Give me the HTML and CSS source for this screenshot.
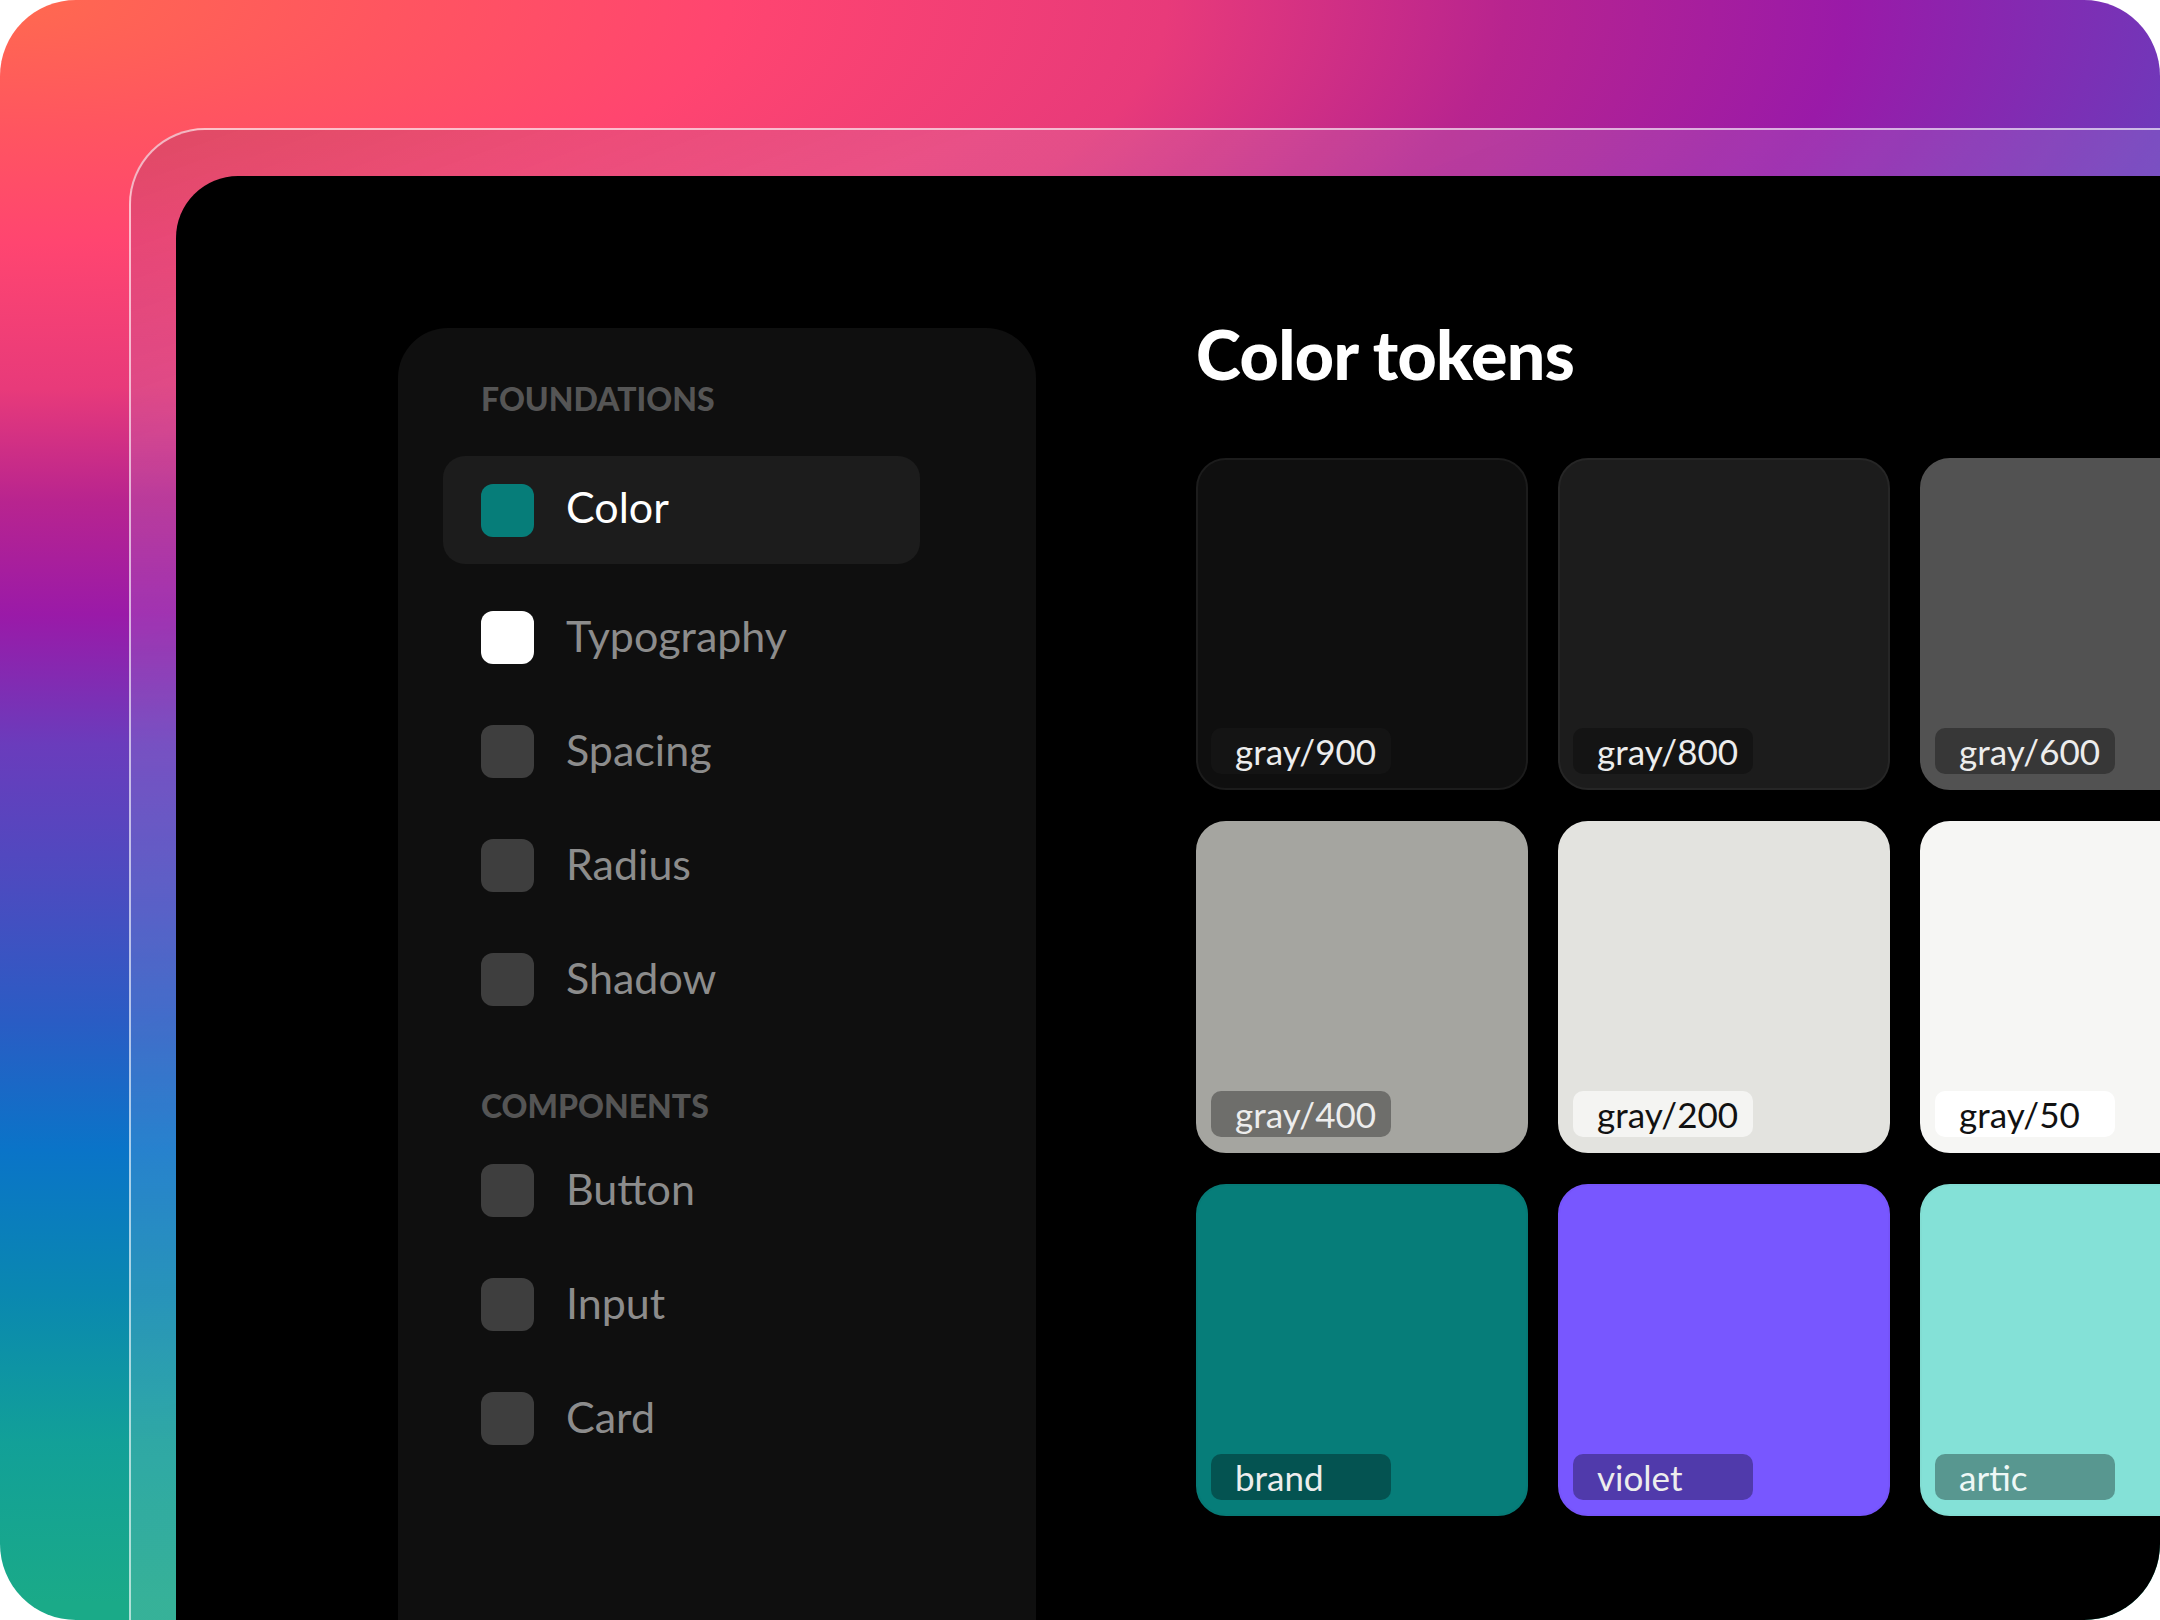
FILE: index.html
```html
<!DOCTYPE html>
<html lang="en">
<head>
<meta charset="utf-8">
<title>Color tokens</title>
<link rel="stylesheet" href="styles.css">
</head>
<body>
<div class="stage">
  <div class="frame">
    <div class="panel">
      <aside class="sidebar">
        <div class="section-label">FOUNDATIONS</div>
        <div class="nav-item active"><span class="swatch swatch-brand"></span><span class="nav-text">Color</span></div>
        <div class="nav-item"><span class="swatch swatch-white"></span><span class="nav-text">Typography</span></div>
        <div class="nav-item"><span class="swatch"></span><span class="nav-text">Spacing</span></div>
        <div class="nav-item"><span class="swatch"></span><span class="nav-text">Radius</span></div>
        <div class="nav-item"><span class="swatch"></span><span class="nav-text">Shadow</span></div>
        <div class="section-label section-label-second">COMPONENTS</div>
        <div class="nav-item"><span class="swatch"></span><span class="nav-text">Button</span></div>
        <div class="nav-item"><span class="swatch"></span><span class="nav-text">Input</span></div>
        <div class="nav-item"><span class="swatch"></span><span class="nav-text">Card</span></div>
      </aside>
      <main class="content">
        <h1 class="title">Color tokens</h1>
        <div class="grid">
          <div class="token token-g900"><span class="token-label">gray/900</span></div>
          <div class="token token-g800"><span class="token-label">gray/800</span></div>
          <div class="token token-g600"><span class="token-label">gray/600</span></div>
          <div class="token token-g400"><span class="token-label">gray/400</span></div>
          <div class="token token-g200 token-light"><span class="token-label">gray/200</span></div>
          <div class="token token-g50 token-light"><span class="token-label">gray/50</span></div>
          <div class="token token-brand"><span class="token-label">brand</span></div>
          <div class="token token-violet"><span class="token-label">violet</span></div>
          <div class="token token-artic"><span class="token-label">artic</span></div>
        </div>
      </main>
    </div>
  </div>
</div>
</body>
</html>
```

FILE: styles.css
```css
* {
  box-sizing: border-box;
}

html, body {
  margin: 0;
  padding: 0;
  background: #ffffff;
}

body {
  width: 2160px;
  height: 1620px;
  overflow: hidden;
  font-family: "Lato", "Noto Sans", "Liberation Sans", sans-serif;
}

.stage {
  width: 2160px;
  height: 1620px;
  border-radius: 76px;
  overflow: hidden;
  display: flex;
  padding: 128px 0 0 129px;
  background: radial-gradient(ellipse 4860px 1620px at 0 0,
    #ff6a4f 0%,
    #ff5560 8%,
    #ff4570 15%,
    #e83a7a 24%,
    #b8248f 31%,
    #9a1aa8 38%,
    #6a3cbc 46%,
    #4a4cc0 55%,
    #2a5cc4 63%,
    #0a74c8 71%,
    #0a88b0 80%,
    #12a098 89%,
    #1aaa88 99%);
}

.frame {
  flex: 1;
  display: flex;
  border-top: 2px solid rgba(255, 255, 255, 0.6);
  border-left: 2px solid rgba(255, 255, 255, 0.6);
  border-top-left-radius: 76px;
  background: linear-gradient(160deg,
    rgba(110, 40, 110, 0.22) 0%,
    rgba(200, 200, 230, 0.14) 14%,
    rgba(220, 230, 255, 0.16) 100%);
  padding: 46px 0 0 45px;
}

.panel {
  flex: 1;
  display: flex;
  align-items: stretch;
  gap: 160px;
  background: #000000;
  border-top-left-radius: 62px;
  overflow: hidden;
  padding: 138px 0 0 222px;
}

/* Sidebar */
.sidebar {
  flex: none;
  width: 638px;
  margin-top: 14px;
  background: #0f0f0f;
  border-radius: 50px 50px 0 0;
  padding: 51px 0 0 45px;
  display: flex;
  flex-direction: column;
  align-items: flex-start;
}

.section-label {
  font-weight: 900;
  font-size: 32px;
  line-height: 40px;
  color: #555555;
  letter-spacing: 0;
  margin: 0 0 37px 38px;
}

.section-label-second {
  margin-top: 47px;
  margin-bottom: 10px;
}

.nav-item {
  width: 477px;
  height: 108px;
  flex: none;
  display: flex;
  align-items: center;
  gap: 32px;
  padding-left: 38px;
  border-radius: 22px;
  margin-bottom: 6px;
}

.nav-item.active {
  background: #1c1c1c;
  margin-bottom: 19px;
}

.swatch {
  width: 53px;
  height: 53px;
  flex: none;
  border-radius: 12px;
  background: #3e3e3e;
}

.swatch-brand {
  background: #067d79;
}

.swatch-white {
  background: #ffffff;
}

.nav-text {
  font-size: 43px;
  line-height: 52px;
  color: #8c8c8c;
  font-weight: 400;
  padding-bottom: 2px;
}

.nav-item.active .nav-text {
  color: #ffffff;
  padding-bottom: 6px;
}

/* Content */
.content {
  flex: none;
  display: flex;
  flex-direction: column;
}

.title {
  margin: 0;
  font-size: 68px;
  line-height: 80px;
  font-weight: 900;
  color: #ffffff;
  letter-spacing: -0.6px;
}

.grid {
  margin-top: 64px;
  display: grid;
  grid-template-columns: repeat(3, 332px);
  grid-auto-rows: 332px;
  gap: 31px 30px;
}

.token {
  border-radius: 30px;
  border: 2px solid rgba(255, 255, 255, 0.06);
  display: flex;
  align-items: flex-end;
  padding: 0 0 14px 13px;
}

.token-label {
  width: 180px;
  height: 46px;
  border-radius: 10px;
  display: flex;
  align-items: center;
  padding-left: 24px;
  font-size: 35px;
  line-height: 42px;
  font-weight: 400;
  color: #ededed;
  background: rgba(0, 0, 0, 0.33);
}

.token-light .token-label {
  background: rgba(255, 255, 255, 0.6);
  color: #111111;
}

.token-g900 { background: #0f0f0f; border-color: #1c1c1c; }
.token-g900 .token-label { background: #141414; }
.token-g800 { background: #1c1c1c; border-color: #262626; }
.token-g800 .token-label { background: #141414; }
.token-g600 { background: #525252; border-color: #525252; }
.token-g400 { background: #a5a5a0; border-color: #a5a5a0; }
.token-g200 { background: #e3e3df; border-color: #e3e3df; }
.token-g50 { background: #f6f6f4; border-color: #f6f6f4; }
.token-g50 .token-label { background: #ffffff; }
.token-brand { background: #067d79; border-color: #067a76; }
.token-violet { background: #7857ff; border-color: #7654fa; }
.token-artic { background: #84e1d7; border-color: #82ddd3; }
.token-artic .token-label { color: #eef8f6; }
```
